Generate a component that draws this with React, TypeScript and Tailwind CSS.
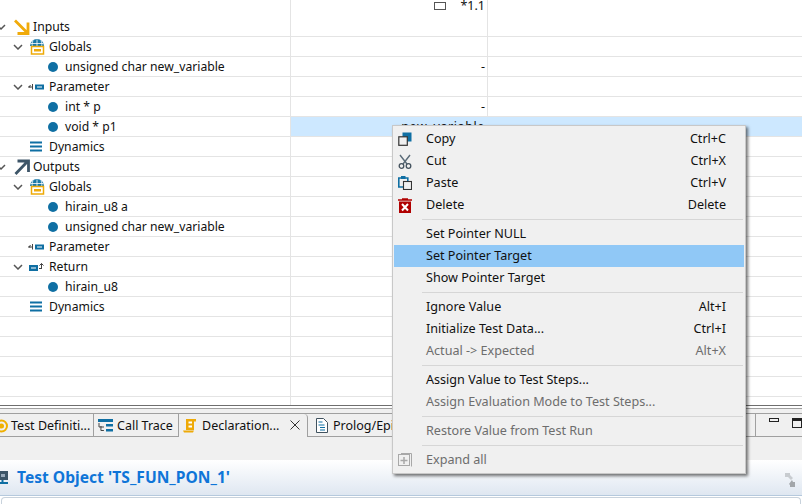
import React from "react";

const Chevron = () => (
  <svg width="10" height="6" viewBox="0 0 10 6" className="shrink-0">
    <path d="M1 1l4 4 4-4" fill="none" stroke="#555" strokeWidth="1.5" />
  </svg>
);

const InputsIcon = () => (
  <svg width="16" height="16" viewBox="0 0 16 16" className="shrink-0">
    <path d="M1 1.500l12 12M14 3.500v11H3.500" fill="none" stroke="#f0aa0a" strokeWidth="2.800" />
  </svg>
);
const OutputsIcon = () => (
  <svg width="16" height="16" viewBox="0 0 16 16" className="shrink-0">
    <path d="M1.500 15L13 3M3.500 2h11v11" fill="none" stroke="#3d5568" strokeWidth="2.800" />
  </svg>
);
const GlobalsIcon = () => (
  <svg width="16" height="16" viewBox="0 0 16 16" className="shrink-0">
    <path d="M1 7a7 7 0 0 1 14 0z" fill="#1a78a8" />
    <path d="M4 1.5C3 4 3 5 3.3 7M8 .5v6.500M12 1.500c1 2.500 1 3.500.7 5.500M1.500 4.500h13" stroke="#fff" strokeWidth=".8" fill="none" />
    <rect x="2.500" y="7.500" width="12" height="7.500" fill="#fff" stroke="#eeaa08" strokeWidth="1.500" />
    <rect x="5" y="10" width="7" height="2.500" fill="#eeaa08" />
  </svg>
);
const ParamIcon = () => (
  <svg width="16" height="8" viewBox="0 0 16 8" className="shrink-0 -ml-[1px]">
    <path d="M0 4h4M4.500 1v5.500M2.500 2L1 4l1.500 0" stroke="#444" strokeWidth="1" fill="none" />
    <rect x="7" y="1.500" width="9" height="5" fill="#0f6fa3" />
    <rect x="9" y="3.500" width="5" height="1" fill="#fff" />
  </svg>
);
const ReturnIcon = () => (
  <svg width="15" height="10" viewBox="0 0 15 10" className="shrink-0">
    <rect x="0" y="3" width="9" height="6" fill="#0f6fa3" />
    <rect x="2" y="5.500" width="5" height="1" fill="#fff" />
    <path d="M12.500 7V1.500M10.500 3.500l2-2 2 2M10 6.500h2.500" stroke="#444" strokeWidth="1" fill="none" />
  </svg>
);
const DynIcon = () => (
  <svg width="14" height="11" viewBox="0 0 14 11" className="shrink-0">
    <path d="M1 1.500h12M1 5.500h12M1 9.500h12" stroke="#0f6fa3" strokeWidth="2" />
  </svg>
);

type Row = { level: 0 | 1 | 2; text: string; chev?: boolean; icon?: React.ReactNode; value?: string; sel?: boolean };

const rows: Row[] = [
  { level: 0, text: "Inputs", chev: true, icon: <InputsIcon /> },
  { level: 1, text: "Globals", chev: true, icon: <GlobalsIcon /> },
  { level: 2, text: "unsigned char new_variable", value: "-" },
  { level: 1, text: "Parameter", chev: true, icon: <ParamIcon /> },
  { level: 2, text: "int * p", value: "-" },
  { level: 2, text: "void * p1", value: "new_variable", sel: true },
  { level: 1, text: "Dynamics", icon: <DynIcon /> },
  { level: 0, text: "Outputs", chev: true, icon: <OutputsIcon /> },
  { level: 1, text: "Globals", chev: true, icon: <GlobalsIcon /> },
  { level: 2, text: "hirain_u8 a" },
  { level: 2, text: "unsigned char new_variable" },
  { level: 1, text: "Parameter", icon: <ParamIcon /> },
  { level: 1, text: "Return", chev: true, icon: <ReturnIcon /> },
  { level: 2, text: "hirain_u8" },
  { level: 1, text: "Dynamics", icon: <DynIcon /> },
  { level: 2, text: "" },
  { level: 2, text: "" },
  { level: 2, text: "" },
  { level: 2, text: "" },
];

function TreeCell({ r }: { r: Row }) {
  if (!r.text) return <div className="border-r border-[#e4e4e4]" />;
  if (r.level === 2)
    return (
      <div className="flex items-center pl-[48px] gap-[7px] border-r border-[#e4e4e4]">
        <span className="w-[10px] h-[10px] rounded-full bg-[#0f6fa3] shrink-0" />
        <span className="pt-[2px] text-[12.200px]">{r.text}</span>
      </div>
    );
  if (r.level === 1)
    return (
      <div className="flex items-center border-r border-[#e4e4e4]">
        <span className="w-[29px] pl-[13px] flex shrink-0">{r.chev && <Chevron />}</span>
        <span className="w-[20px] flex justify-start shrink-0">{r.icon}</span>
        <span className="pt-[2px] text-[12.200px]">{r.text}</span>
      </div>
    );
  return (
    <div className="flex items-center border-r border-[#e4e4e4]">
      <span className="w-[14px] -ml-[4px] mr-[4px] flex shrink-0">{r.chev && <Chevron />}</span>
      <span className="w-[19px] flex shrink-0">{r.icon}</span>
      <span className="pt-[2px] text-[12.200px]">{r.text}</span>
    </div>
  );
}

const CopyIcon = () => (
  <svg width="14" height="14" viewBox="0 0 14 14">
    <rect x="4.500" y="0.500" width="9" height="9" fill="#0f6fa3" />
    <rect x="0.800" y="4.800" width="8.500" height="8.500" fill="#f0f0f0" stroke="#333" strokeWidth="1.200" />
  </svg>
);
const CutIcon = () => (
  <svg width="14" height="15" viewBox="0 0 14 15">
    <path d="M2 1l7 9M12 1L5 10" stroke="#5a6b78" strokeWidth="1.400" fill="none" />
    <circle cx="3.500" cy="12" r="2.300" fill="none" stroke="#44525e" strokeWidth="1.300" />
    <circle cx="10.500" cy="12" r="2.300" fill="none" stroke="#44525e" strokeWidth="1.300" />
  </svg>
);
const PasteIcon = () => (
  <svg width="14" height="14" viewBox="0 0 14 14">
    <path d="M.8 2h9v9h-9z" fill="none" stroke="#0f6fa3" strokeWidth="1.600" />
    <rect x="3" y="0" width="4.500" height="3" fill="#0f6fa3" />
    <rect x="5.500" y="5.500" width="8" height="8" fill="#f0f0f0" stroke="#333" strokeWidth="1.100" />
  </svg>
);
const DeleteIcon = () => (
  <svg width="14" height="15" viewBox="0 0 14 15">
    <path d="M0 2h14M4 1h6" stroke="#b00000" strokeWidth="1.500" />
    <rect x="1" y="3.500" width="12" height="11.500" fill="#b00000" />
    <path d="M4 6l6 6.500M10 6l-6 6.500" stroke="#fff" strokeWidth="2" />
  </svg>
);
const ExpandIcon = () => (
  <svg width="14" height="14" viewBox="0 0 14 14">
    <rect x="0.500" y="1.500" width="11" height="11" fill="#f0f0f0" stroke="#a8a8a8" />
    <path d="M6 4v7M2.500 7.500h7" stroke="#a8a8a8" strokeWidth="1.500" />
    <path d="M3 .5h10.500v13" stroke="#a8a8a8" fill="none" />
  </svg>
);

function Item({
  label,
  shortcut,
  icon,
  disabled,
  active,
}: {
  label: string;
  shortcut?: string;
  icon?: React.ReactNode;
  disabled?: boolean;
  active?: boolean;
}) {
  return (
    <div className={`h-[22px] flex items-center mx-[1px] ${active ? "bg-[#90c8f6]" : ""} ${disabled ? "text-[#6d6d6d]" : "text-[#111]"}`}>
      <span className="w-[32px] pl-[4px] flex items-center shrink-0">{icon}</span>
      <span className="flex-1">{label}</span>
      {shortcut && <span className="pr-[18px]">{shortcut}</span>}
    </div>
  );
}
const Sep = () => (
  <div className="h-[7px] flex items-center pl-[29px] pr-[2px]">
    <div className="h-px w-full bg-[#d6d6d6]" />
  </div>
);

function Tab({ w, icon, text, active }: { w: string; icon?: React.ReactNode; text: string; active?: boolean }) {
  return (
    <div
      className={`${w} h-[23px] flex items-center shrink-0 border-r border-[#a0a0a0] ${
        active ? "-mb-px bg-[#f0f0f0] rounded-tr-sm" : ""
      }`}
    >
      {icon}
      <span className="whitespace-nowrap pt-[2px]">{text}</span>
    </div>
  );
}

export default function App() {
  return (
    <div className="relative w-[802px] h-[504px] overflow-hidden bg-white text-[12.500px] text-[#111] font-['Noto_Sans','Open_Sans',sans-serif] leading-none">
      <div className="grid grid-cols-[291px_197px_1fr] h-[17px]">
        <div className="border-r border-[#e4e4e4]" />
        <div className="border-r border-[#e4e4e4] flex items-start justify-end relative">
          <span className="absolute left-[143px] top-[2px] w-[12px] h-[8px] border border-[#555]" />
          <span className="mr-[2px]">*1.1</span>
        </div>
        <div />
      </div>
      {rows.map((r, i) => (
        <div key={i} className="grid grid-cols-[291px_197px_1fr] h-[20px] border-b border-[#e4e4e4]">
          <TreeCell r={r} />
          <div
            className={`flex items-center justify-end pr-[2px] border-r ${
              r.sel ? "bg-[#cde8ff] border-[#cde8ff] tracking-[0.6px]" : "border-[#e4e4e4]"
            }`}
          >
            <span className="pt-[2px]">{r.value}</span>
          </div>
          <div className={r.sel ? "bg-[#cde8ff]" : ""} />
        </div>
      ))}
      <div className="grid grid-cols-[291px_197px_1fr] h-[8px]">
        <div className="border-r border-[#e4e4e4]" />
        <div className="border-r border-[#e4e4e4]" />
        <div />
      </div>
      <div className="h-[3px] border-t border-[#6e6e6e] bg-white" />
      <div className="h-px bg-[#a0a0a0]" />
      <div className="h-[4px] bg-[#f0f0f0]" />
      <div className="h-[24px] flex bg-[#f0f0f0] border-y border-[#a0a0a0]">
        <Tab
          w="w-[94px]"
          text="Test Definiti..."
          icon={
            <span className="-ml-[5px] mr-[3px] flex">
              <svg width="13" height="14" viewBox="0 0 13 14">
                <circle cx="6.500" cy="7" r="5.500" fill="none" stroke="#f0b000" strokeWidth="2" />
                <circle cx="6.500" cy="7" r="2.500" fill="#f0b000" />
              </svg>
            </span>
          }
        />
        <Tab
          w="w-[85px]"
          text="Call Trace"
          icon={
            <span className="ml-[4px] mr-[4px] flex">
              <svg width="15" height="13" viewBox="0 0 15 13">
                <rect x="0" y="0" width="15" height="3" fill="#0f6fa3" />
                <rect x="8" y="5" width="7" height="2.500" fill="#0f6fa3" />
                <rect x="8" y="10" width="7" height="2.500" fill="#0f6fa3" />
                <path d="M1 4v4h5M3 7l-.1 4.500h3" stroke="#444" fill="none" strokeWidth="1" />
              </svg>
            </span>
          }
        />
        <Tab
          w="w-[129px]"
          active
          text="Declaration..."
          icon={
            <span className="ml-[4px] mr-[5px] flex">
              <svg width="14" height="15" viewBox="0 0 14 15">
                <path d="M3 1h10v2.500H11V12H3z" fill="#eeaa08" />
                <rect x="5.500" y="3.500" width="3.500" height="2" fill="#fff" />
                <rect x="5.500" y="7.500" width="3.500" height="2" fill="#fff" />
                <path d="M0 12.500h11l-1 2H1z" fill="#eeaa08" />
              </svg>
            </span>
          }
        />
        <svg width="10" height="10" viewBox="0 0 10 10" className="-ml-[18px] mr-[8px] mt-[6px] shrink-0 relative z-10">
          <path d="M.5.5l9 9M9.500.5l-9 9" stroke="#333" strokeWidth="1" />
        </svg>
        <Tab
          w="w-[448px]"
          text="Prolog/Epilog"
          icon={
            <span className="ml-[8px] mr-[5px] flex">
              <svg width="12" height="15" viewBox="0 0 12 15">
                <path d="M.5.5h7l4 4v10H.5z" fill="#fff" stroke="#40525f" />
                <path d="M2.500 4h4M2.500 7h6M4 9.500h5M4 12h5" stroke="#0f6fa3" />
              </svg>
            </span>
          }
        />
        <span className="ml-[13px] mt-[4px] w-[10px] h-[4px] border border-[#222]" />
        <span className="ml-[13px] mt-[4px] w-[10px] h-[10px] border border-[#222] border-t-[3px]" />
      </div>
      <div className="h-[23px] bg-[#f0f0f0]" />
      <div className="relative h-[36px] bg-gradient-to-b from-white to-[#dfe7f1] border-b border-[#b5c9dd] flex items-center">
        <span className="-ml-[3px] mr-[8px] flex">
          <svg width="12" height="15" viewBox="0 0 12 15">
            <rect x="1" y="1" width="10" height="9" fill="#3d5568" />
            <rect x="4" y="4" width="4" height="3" fill="#9ab" />
            <path d="M0 13h11M5.500 10v3" stroke="#0f6fa3" strokeWidth="2" />
          </svg>
        </span>
        <span className="font-bold text-[15.600px] text-[#0f75d8]">Test Object 'TS_FUN_PON_1'</span>
        <svg width="12" height="14" viewBox="0 0 12 14" className="absolute right-[6px] top-[13px]">
          <path d="M1 0l5 0 0 2 3 3-2 2-3-3-3 0z" fill="#c8ccd0" />
          <path d="M11 14l-5 0 0-2-1-1 0 0 3-4 1 2 2 0z" fill="#a2a6aa" />
        </svg>
      </div>
      <div className="h-[8px] mt-[1px] mx-[1px] rounded-t border border-b-0 border-[#c8d2dc]" />

      <div className="absolute left-[392px] top-[125px] w-[354px] h-[349px] pt-[2px] bg-[#f0f0f0] border border-[#c8c8c8] shadow-[2px_2px_3px_rgba(0,0,0,0.55)] text-[12.600px]">
        <Item label="Copy" shortcut="Ctrl+C" icon={<CopyIcon />} />
        <Item label="Cut" shortcut="Ctrl+X" icon={<CutIcon />} />
        <Item label="Paste" shortcut="Ctrl+V" icon={<PasteIcon />} />
        <Item label="Delete" shortcut="Delete" icon={<DeleteIcon />} />
        <Sep />
        <Item label="Set Pointer NULL" />
        <Item label="Set Pointer Target" active />
        <Item label="Show Pointer Target" />
        <Sep />
        <Item label="Ignore Value" shortcut="Alt+I" />
        <Item label="Initialize Test Data..." shortcut="Ctrl+I" />
        <Item label="Actual -> Expected" shortcut="Alt+X" disabled />
        <Sep />
        <Item label="Assign Value to Test Steps..." />
        <Item label="Assign Evaluation Mode to Test Steps..." disabled />
        <Sep />
        <Item label="Restore Value from Test Run" disabled />
        <Sep />
        <Item label="Expand all" icon={<ExpandIcon />} disabled />
      </div>
    </div>
  );
}
